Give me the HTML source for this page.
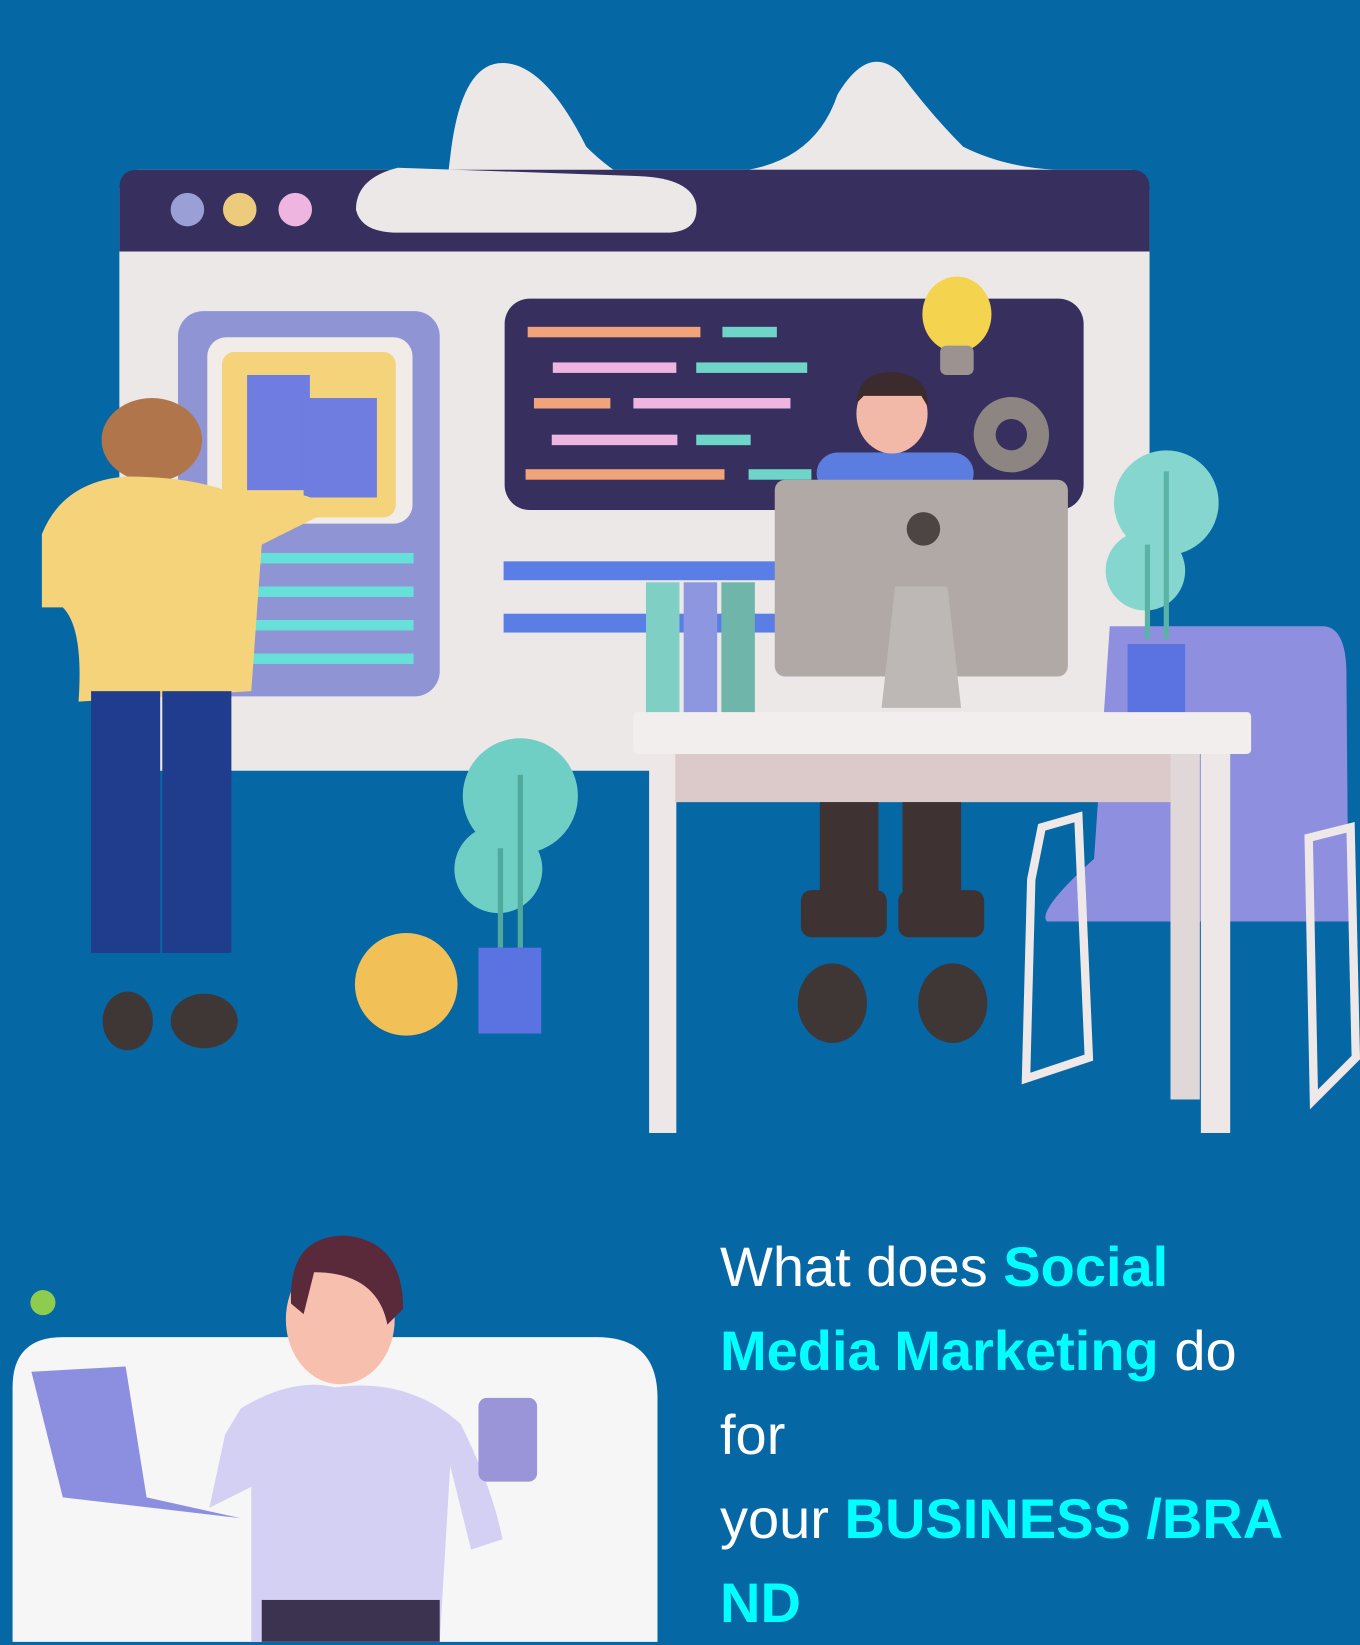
<!DOCTYPE html>
<html><head><meta charset="utf-8"><style>
html,body{margin:0;padding:0;}
body{width:1360px;height:1642px;background:#0567a4;position:relative;overflow:hidden;font-family:"Liberation Sans",sans-serif;}
svg{position:absolute;left:0;top:0;}
.t{position:absolute;left:720px;top:1225px;color:#fff;font-size:56px;line-height:84px;white-space:nowrap;letter-spacing:0px;}
.c{color:#00ffff;font-weight:bold;}
</style></head><body>
<svg width="1360" height="1642" viewBox="0 0 1299 1568">
<!-- clouds -->
<path d="M430 150 Q440 60 480 60 Q520 60 560 140 Q600 180 650 190 L650 230 L420 230 Z" fill="#ece8e8"/>
<path d="M715 162 Q780 150 800 90 Q830 40 860 70 Q890 110 920 140 Q960 160 1010 162 Z" fill="#ece8e8"/>
<!-- browser window -->
<rect x="114" y="162" width="984" height="574" rx="18" fill="#ece8e8"/>
<path d="M132 162 H1080 Q1098 162 1098 180 V240 H114 V180 Q114 162 132 162Z" fill="#37305e"/>
<path d="M380 160 Q340 170 340 200 Q345 222 380 222 H640 Q668 220 665 195 Q660 170 610 168 Z" fill="#ece8e8"/>
<circle cx="179" cy="200" r="16" fill="#9aa0d6"/><circle cx="229" cy="200" r="16" fill="#eccb7c"/><circle cx="282" cy="200" r="16" fill="#eeb5e0"/>
<!-- left panel -->
<rect x="170" y="297" width="250" height="368" rx="24" fill="#8f94d4"/>
<rect x="198" y="322" width="196" height="178" rx="18" fill="#f1ece8"/>
<rect x="212" y="336" width="166" height="158" rx="12" fill="#f4d37a"/>
<rect x="236" y="358" width="60" height="110" fill="#6f7de0"/>
<rect x="290" y="380" width="70" height="95" fill="#6f7de0"/>
<rect x="205" y="528" width="190" height="10" fill="#67e0d9"/><rect x="205" y="560" width="190" height="10" fill="#67e0d9"/><rect x="205" y="592" width="190" height="10" fill="#67e0d9"/><rect x="205" y="624" width="190" height="10" fill="#67e0d9"/>
<!-- code panel -->
<rect x="482" y="285" width="553" height="202" rx="24" fill="#37305e"/>
<rect x="504" y="312" width="165" height="10" fill="#f1a37a"/><rect x="690" y="312" width="52" height="10" fill="#6fd5c8"/>
<rect x="528" y="346" width="118" height="10" fill="#eeb5e0"/><rect x="665" y="346" width="106" height="10" fill="#6fd5c8"/>
<rect x="510" y="380" width="73" height="10" fill="#f1a37a"/><rect x="605" y="380" width="150" height="10" fill="#eeb5e0"/>
<rect x="527" y="415" width="120" height="10" fill="#eeb5e0"/><rect x="665" y="415" width="52" height="10" fill="#6fd5c8"/>
<rect x="502" y="448" width="190" height="10" fill="#f1a37a"/><rect x="715" y="448" width="60" height="10" fill="#6fd5c8"/>
<rect x="481" y="536" width="270" height="18" fill="#5a7de6"/><rect x="481" y="586" width="270" height="18" fill="#5a7de6"/>
<!-- bulb, gear -->
<ellipse cx="914" cy="300" rx="33" ry="36" fill="#f4d34e"/><rect x="898" y="330" width="32" height="28" rx="6" fill="#9c9390"/>
<circle cx="966" cy="415" r="36" fill="#8d8581"/><circle cx="966" cy="415" r="15" fill="#37305e"/>
<!-- man -->
<rect x="780" y="432" width="150" height="40" rx="20" fill="#5c7de0"/>
<ellipse cx="852" cy="395" rx="34" ry="38" fill="#f3b9a8"/><path d="M818 385 Q820 355 852 355 Q888 358 886 388 L880 378 L825 378Z" fill="#3b2a2e"/>
<!-- chair (behind desk) -->
<path d="M1060 598 H1265 Q1285 600 1286 640 L1288 880 H1000 Q990 870 1045 820 Z" fill="#8f8fe0"/>
<path d="M985 840 L995 790 L1030 780 L1040 1010 L980 1030 Z M1250 800 L1290 790 L1295 1010 L1255 1050 Z" fill="none" stroke="#efe8e8" stroke-width="8"/>
<!-- plant right -->
<circle cx="1114" cy="480" r="50" fill="#85d6cf"/><circle cx="1094" cy="545" r="38" fill="#85d6cf"/>
<path d="M1096 610 V520 M1114 610 V450" stroke="#5ab3a6" stroke-width="5"/>
<rect x="1077" y="615" width="55" height="70" fill="#5a73e0"/>
<!-- books -->
<rect x="617" y="556" width="32" height="131" fill="#7fcfc4"/><rect x="653" y="556" width="32" height="131" fill="#8d97e0"/><rect x="689" y="556" width="32" height="131" fill="#6fb5a9"/>
<!-- monitor -->
<rect x="740" y="458" width="280" height="188" rx="10" fill="#b0a9a6"/>
<circle cx="882" cy="505" r="16" fill="#4d4544"/>
<path d="M855 560 H905 L918 676 H842Z" fill="#bdb8b6"/>
<!-- desk -->
<rect x="605" y="680" width="590" height="40" rx="4" fill="#f3eeee"/>
<rect x="620" y="720" width="26" height="362" fill="#ede7e7"/><rect x="645" y="720" width="480" height="46" fill="#dccaca"/>
<rect x="1118" y="720" width="28" height="330" fill="#e0d8d8"/><rect x="1147" y="720" width="28" height="362" fill="#ede7e7"/>
<!-- man legs -->
<rect x="783" y="766" width="56" height="120" fill="#3e3332"/><rect x="862" y="766" width="56" height="120" fill="#3e3332"/>
<rect x="765" y="850" width="82" height="45" rx="10" fill="#3e3332"/><rect x="858" y="850" width="82" height="45" rx="10" fill="#3e3332"/>
<ellipse cx="795" cy="958" rx="33" ry="38" fill="#3f3636"/><ellipse cx="910" cy="958" rx="33" ry="38" fill="#3f3636"/>
<!-- plant mid -->
<circle cx="497" cy="760" r="55" fill="#6fcfc4"/><circle cx="476" cy="830" r="42" fill="#6fcfc4"/>
<path d="M478 905 V810 M497 905 V740" stroke="#4fa99c" stroke-width="5"/>
<rect x="457" y="905" width="60" height="82" fill="#5a73e0"/>
<circle cx="388" cy="940" r="49" fill="#f1c056"/>
<!-- woman -->
<ellipse cx="145" cy="420" rx="48" ry="40" fill="#b0754a"/>
<path d="M40 510 Q60 460 120 455 Q200 455 240 480 Q300 460 310 490 L250 520 L240 660 L75 670 Q80 600 60 580 L40 580Z" fill="#f4d37a"/>
<rect x="87" y="660" width="66" height="250" fill="#203c8c"/><rect x="155" y="660" width="66" height="250" fill="#203c8c"/>
<ellipse cx="122" cy="975" rx="24" ry="28" fill="#3f3636"/><ellipse cx="195" cy="975" rx="32" ry="26" fill="#3f3636"/>
<!-- bottom card -->
<circle cx="41" cy="1244" r="12" fill="#8dcc4e"/>
<path d="M60 1277 H570 Q628 1277 628 1335 V1568 H12 V1325 Q12 1277 60 1277Z" fill="#f6f6f6"/>
<!-- boy -->
<path d="M230 1345 Q280 1315 320 1325 Q390 1315 440 1360 Q470 1420 480 1470 L450 1480 L430 1400 L420 1568 H240 L240 1420 L200 1440 L215 1370 Z" fill="#d4d0f4"/>
<ellipse cx="325" cy="1260" rx="52" ry="62" fill="#f7c0ae"/>
<path d="M278 1245 Q275 1180 330 1180 Q385 1185 385 1250 L370 1265 Q360 1215 300 1215 L290 1255Z" fill="#5a2a3a"/>
<path d="M30 1310 L120 1305 L140 1430 L230 1450 L60 1430 Z" fill="#8c8fe0"/>
<rect x="457" y="1335" width="56" height="80" rx="8" fill="#9a94d8"/>
<rect x="250" y="1528" width="170" height="40" fill="#3b3350"/>
</svg>
<div class="t">What does <span class="c">Social</span><br><span class="c">Media Marketing</span> do<br>for<br>your <span class="c">BUSINESS /BRA</span><br><span class="c">ND</span></div>
</body></html>
